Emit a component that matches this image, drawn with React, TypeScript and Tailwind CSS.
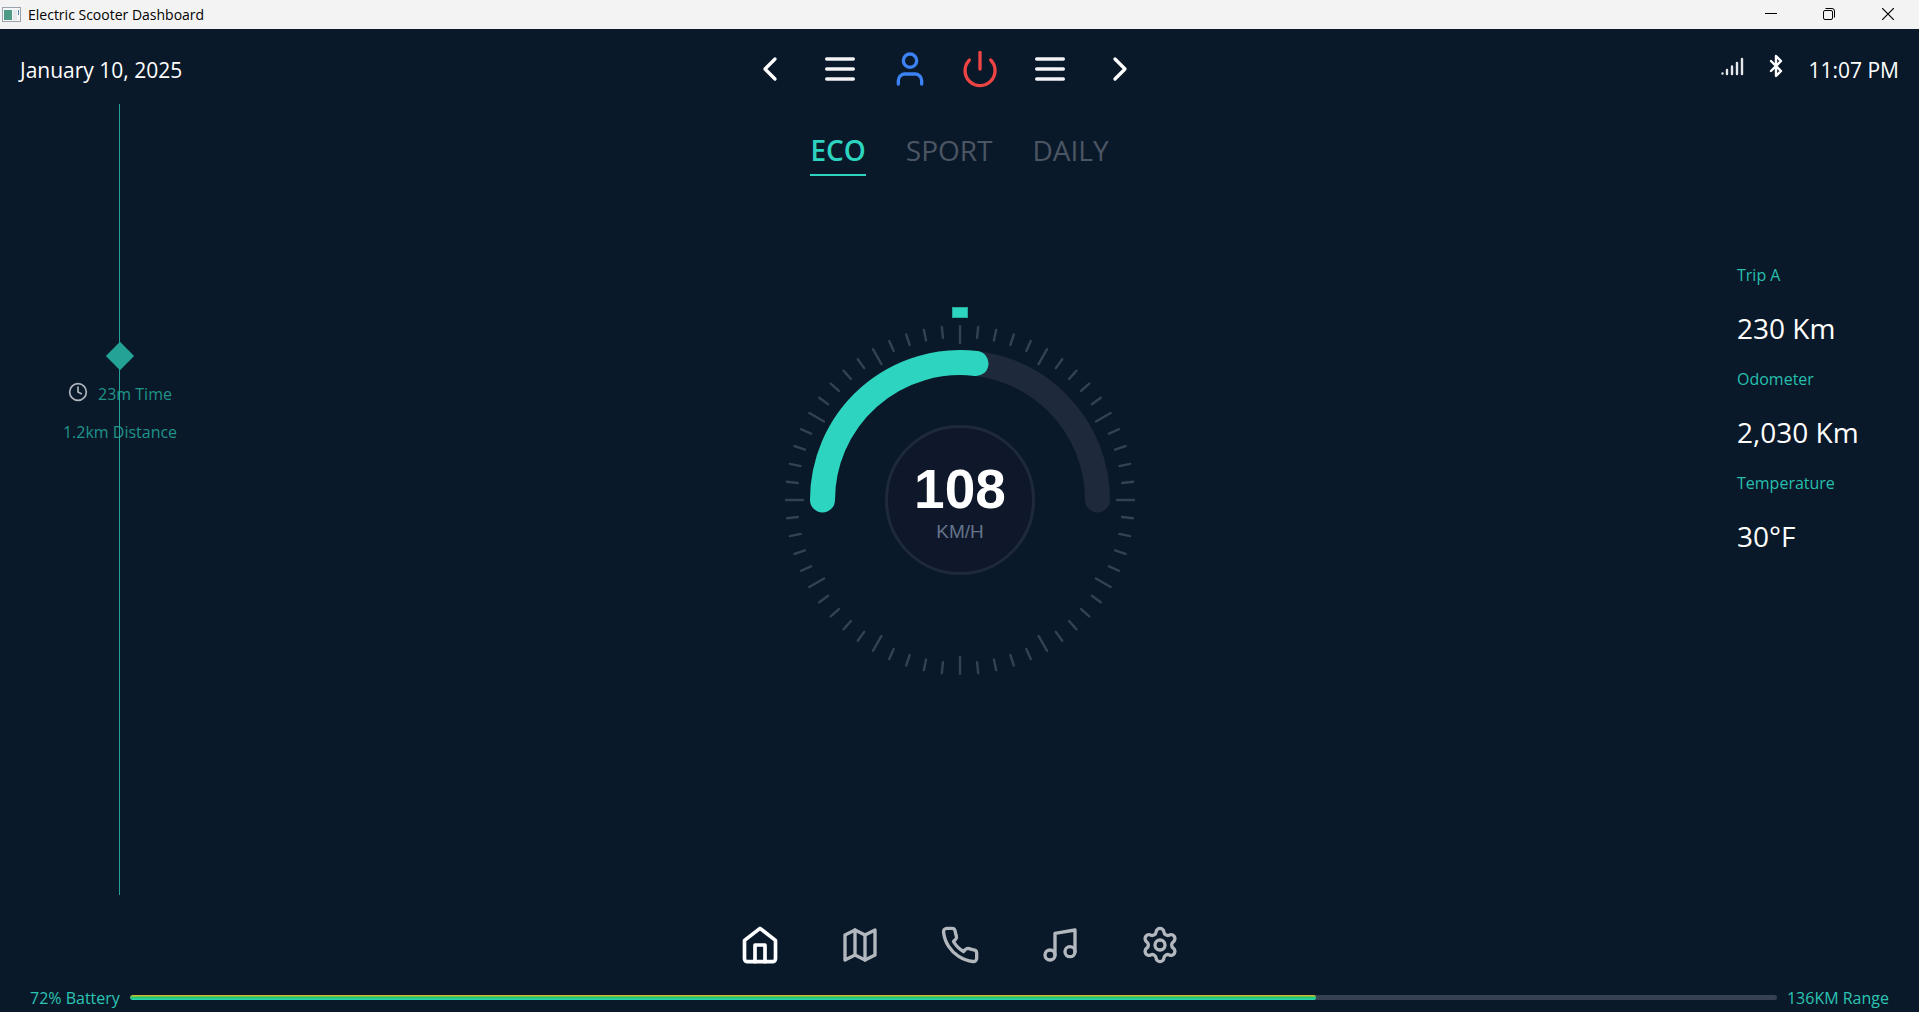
import type { ReactNode } from "react";
import { Bluetooth } from "lucide-react";

function Icon({ children, className = "size-10", width = 2 }: { children: ReactNode; className?: string; width?: number }) {
  return (
    <svg viewBox="0 0 24 24" fill="none" stroke="currentColor" strokeWidth={width} strokeLinecap="round" strokeLinejoin="round" className={className} aria-hidden="true">
      {children}
    </svg>
  );
}

const menu = (
  <>
    <path d="M4 6h16" />
    <path d="M4 12h16" />
    <path d="M4 18h16" />
  </>
);

const topActions = [
  { label: "Previous", color: "text-white", icon: <path d="m15 18-6-6 6-6" /> },
  { label: "Left menu", color: "text-gray-100", icon: menu },
  {
    label: "Profile",
    color: "text-[#3b82f6]",
    icon: (
      <>
        <path d="M19 21v-2a4 4 0 0 0-4-4H9a4 4 0 0 0-4 4v2" />
        <circle cx="12" cy="7" r="4" />
      </>
    ),
  },
  {
    label: "Power",
    color: "text-[#ef4444]",
    icon: (
      <>
        <path d="M12 2v10" />
        <path d="M18.4 6.6a9 9 0 1 1-12.77.04" />
      </>
    ),
  },
  { label: "Right menu", color: "text-gray-100", icon: menu },
  { label: "Next", color: "text-white", icon: <path d="m9 18 6-6-6-6" /> },
];

const navItems = [
  {
    label: "Home",
    color: "text-white",
    width: 2.2,
    icon: (
      <>
        <path d="M2.700 9.200 12 2l9.300 7.200V20.300a1.700 1.700 0 0 1-1.700 1.700H4.400a1.700 1.700 0 0 1-1.700-1.700z" />
        <path d="M9 22V12h6v10" />
      </>
    ),
  },
  {
    label: "Map",
    color: "text-[#b3b8be]",
    width: 2,
    icon: (
      <>
        <path d="M3 6l6-3 6 3 6-3v15l-6 3-6-3-6 3z" />
        <path d="M9 3v15" />
        <path d="M15 6v15" />
      </>
    ),
  },
  {
    label: "Phone",
    color: "text-[#b3b8be]",
    width: 2,
    icon: (
      <path d="M22 16.92v3a2 2 0 0 1-2.18 2 19.79 19.79 0 0 1-8.63-3.070 19.5 19.5 0 0 1-6-6 19.79 19.79 0 0 1-3.070-8.670A2 2 0 0 1 4.110 2h3a2 2 0 0 1 2 1.720 12.840 12.840 0 0 0 .7 2.810 2 2 0 0 1-.45 2.110L8.090 9.910a16 16 0 0 0 6 6l1.270-1.270a2 2 0 0 1 2.110-.45 12.840 12.840 0 0 0 2.810.7A2 2 0 0 1 22 16.920z" />
    ),
  },
  {
    label: "Music",
    color: "text-[#b3b8be]",
    width: 2,
    icon: (
      <>
        <path d="M9 18V5l12-2v13" />
        <circle cx="6" cy="18" r="3" />
        <circle cx="18" cy="16" r="3" />
      </>
    ),
  },
  {
    label: "Settings",
    color: "text-[#b3b8be]",
    width: 2,
    icon: (
      <>
        <path d="M9.671 4.136a2.340 2.340 0 0 1 4.659 0 2.340 2.340 0 0 0 3.319 1.915 2.340 2.340 0 0 1 2.330 4.033 2.340 2.340 0 0 0 0 3.831 2.340 2.340 0 0 1-2.330 4.033 2.340 2.340 0 0 0-3.319 1.915 2.340 2.340 0 0 1-4.659 0 2.340 2.340 0 0 0-3.320-1.915 2.340 2.340 0 0 1-2.330-4.033 2.340 2.340 0 0 0 0-3.831A2.340 2.340 0 0 1 6.350 6.051a2.340 2.340 0 0 0 3.319-1.915" />
        <circle cx="12" cy="12" r="3" />
      </>
    ),
  },
];

const stats = [
  { label: "Trip A", value: "230 Km" },
  { label: "Odometer", value: "2,030 Km" },
  { label: "Temperature", value: "30°F" },
];

const ticks = Array.from({ length: 60 }, (_, i) => ({ angle: i * 6, end: i % 5 === 0 ? 53 : 47 }));

function TitleBar() {
  return (
    <div className="flex h-[29px] shrink-0 items-center bg-[#f3f3f3] text-black">
      <svg viewBox="0 0 20 16" className="ml-[2px] h-4 w-5" aria-hidden="true">
        <rect x="0.5" y="0.5" width="18" height="14" fill="#f4f6f8" stroke="#9aa3ab" />
        <rect x="2" y="3" width="8" height="10" fill="#4d9a86" />
        <rect x="11" y="3" width="4" height="10" fill="#e6e9ec" />
        <rect x="16" y="3" width="1" height="5" fill="#4d86b0" />
      </svg>
      <span className="ml-[6px] text-[14px]">Electric Scooter Dashboard</span>
      <div className="ml-auto flex h-full pb-px pr-px">
        <button aria-label="Minimize" className="flex w-[58px] items-center justify-center">
          <svg viewBox="0 0 12 12" className="size-3" stroke="currentColor" aria-hidden="true"><path d="M0 5.500h12" /></svg>
        </button>
        <button aria-label="Restore" className="flex w-[58px] items-center justify-center">
          <svg viewBox="0 0 12 12" className="size-3" fill="none" stroke="currentColor" aria-hidden="true">
            <rect x="0.5" y="2.5" width="9" height="9" rx="1.500" />
            <path d="M2.500.5H9a2.500 2.500 0 0 1 2.500 2.500v6.500" />
          </svg>
        </button>
        <button aria-label="Close" className="flex w-[60px] items-center justify-center">
          <svg viewBox="0 0 12 12" className="size-3" stroke="currentColor" strokeWidth="1.200" aria-hidden="true"><path d="M0 0l12 12M12 0L0 12" /></svg>
        </button>
      </div>
    </div>
  );
}

function Gauge() {
  return (
    <svg viewBox="0 0 380 400" className="h-[400px] w-[380px]" role="img" aria-label="Speed 108 km/h">
      <rect x="182.500" y="17.500" width="15" height="10" fill="#2dd4bf" stroke="#25a99b" />
      {ticks.map((t) => (
        <line key={t.angle} x1="190" x2="190" y1="36" y2={t.end} stroke="#334155" strokeWidth="2.400" strokeLinecap="round" transform={`rotate(${t.angle} 190 210)`} />
      ))}
      <path d="M52.500 210a137.500 137.500 0 0 1 275 0" fill="none" stroke="#1e293b" strokeWidth="25" strokeLinecap="round" />
      <path d="M52.500 210A137.500 137.500 0 0 1 206 73.500" fill="none" stroke="#2dd4bf" strokeWidth="25" strokeLinecap="round" />
      <circle cx="190" cy="210" r="73.500" fill="#0f172a" stroke="#1e293b" strokeWidth="3" />
      <text x="190" y="218" textAnchor="middle" className="fill-white font-['Liberation_Sans',sans-serif] text-[55px] font-bold">108</text>
      <text x="190" y="248" textAnchor="middle" className="fill-[#64748b] font-['Liberation_Sans',sans-serif] text-[19px]">KM/H</text>
    </svg>
  );
}

export default function App() {
  return (
    <div className="flex h-screen flex-col overflow-hidden bg-[#0a1929] font-['Open_Sans',sans-serif] text-white">
      <TitleBar />
      <header className="grid shrink-0 grid-cols-[1fr_auto_1fr] items-center px-5 pt-5">
        <time className="pt-[2px] text-[21px] leading-[38px]">January 10, 2025</time>
        <div className="mr-[30px] flex gap-[30px]">
          {topActions.map((a) => (
            <button key={a.label} aria-label={a.label} className={a.color}><Icon>{a.icon}</Icon></button>
          ))}
        </div>
        <div className="flex items-center justify-end">
          <svg viewBox="0 0 24 20" className="mb-[6px] mr-5 h-5 w-6" stroke="#e5e7eb" strokeWidth="2.400" strokeLinecap="round" aria-label="Signal strength">
            <path d="M2.500 17.500v.1M7 14v4M12 10.500V18M17 7v11M22 3v15" />
          </svg>
          <Bluetooth className="mb-[6px] mr-5 size-6" strokeWidth={2.4} aria-label="Bluetooth" />
          <time className="pt-[2px] text-[21px] leading-[38px]">11:07 PM</time>
        </div>
      </header>

      <main className="grid min-h-0 flex-1 grid-cols-[1fr_auto_1fr]">
        <section className="relative ml-5 mt-[15px] w-[200px] text-[#1f9389]">
          <div className="absolute inset-y-0 left-[99px] w-px bg-[#25a296]" />
          <div className="flex flex-col items-center pt-[242px]">
            <div className="size-5 rotate-45 bg-[#25a296]" />
            <p className="mt-4 flex items-center gap-[10px] text-[16px] leading-5">
              <Icon className="mb-1 size-5 text-[#b0b6bd]"><circle cx="12" cy="12" r="10" /><path d="M12 6v6l4 2" /></Icon>
              23m Time
            </p>
            <p className="mt-4 text-[16px] leading-5">1.2km Distance</p>
          </div>
        </section>

        <section className="flex flex-col items-center">
          <div className="mt-10 flex gap-10 text-[28px] leading-[43px]" role="tablist">
            <button role="tab" aria-selected="true" className="border-b-2 border-[#2dd4bf] pb-[2px] font-semibold text-[#2dd4bf]">ECO</button>
            <button role="tab" aria-selected="false" className="border-b-2 border-transparent pb-[2px] text-[#4b5563]">SPORT</button>
            <button role="tab" aria-selected="false" className="border-b-2 border-transparent pb-[2px] text-[#4b5563]">DAILY</button>
          </div>
          <div className="mt-[114px]"><Gauge /></div>
        </section>

        <dl className="ml-auto mt-[171px] w-[182px]">
          {stats.map((s) => (
            <div key={s.label} className="h-[104px]">
              <dt className="text-[16px] leading-[30px] text-[#26bfae]">{s.label}</dt>
              <dd className="mt-4 text-[28px] leading-[44px]">{s.value}</dd>
            </div>
          ))}
        </dl>
      </main>

      <nav className="mt-[30px] flex shrink-0 justify-center gap-[60px]">
        {navItems.map((n) => (
          <button key={n.label} aria-label={n.label} className={n.color}><Icon width={n.width}>{n.icon}</Icon></button>
        ))}
      </nav>
      <footer className="flex shrink-0 items-center gap-[10px] px-[30px] pb-[1px] pt-5 text-[16px] leading-[26px] text-[#2bc4b3]">
        <span>72% Battery</span>
        <div className="mb-[2px] h-[5px] flex-1 overflow-hidden rounded-full bg-gray-700" role="progressbar" aria-label="Battery" aria-valuenow={72} aria-valuemin={0} aria-valuemax={100}>
          <div className="h-full w-[72%] rounded-full bg-linear-to-b from-[#eab308] via-[#22c55e] via-40% to-[#2dd4bf]" />
        </div>
        <span>136KM Range</span>
      </footer>
    </div>
  );
}
